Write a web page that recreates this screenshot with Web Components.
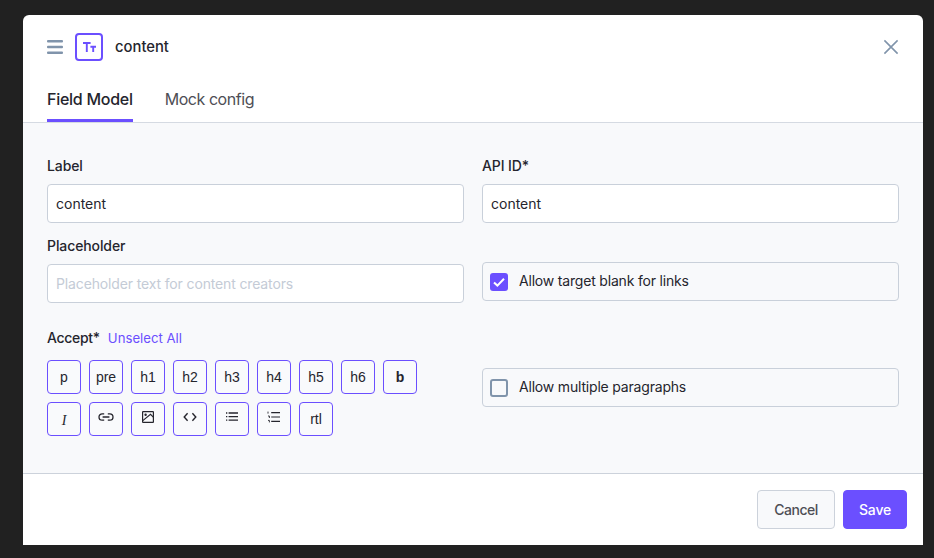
<!DOCTYPE html>
<html>
<head>
<meta charset="utf-8">
<title>content</title>
<style>
    html, body { margin: 0; height: 100%; }
    body {
        background: #212121;
        font-family: Inter, "Liberation Sans", sans-serif;
        color: #25252d;
        overflow: hidden;
    }
</style>
</head>
<body>
<field-modal>
    <span slot="title">content</span>

    <text-field label="Label" value="content"></text-field>
    <text-field slot="right" label="API ID*" value="content"></text-field>
    <text-field label="Placeholder" placeholder="Placeholder text for content creators"></text-field>
    <check-box slot="right" class="first" checked>Allow target blank for links</check-box>

    <accept-list></accept-list>
    <check-box slot="right" class="second">Allow multiple paragraphs</check-box>
</field-modal>

<script>
const ACCENT = "#6b4fff";

class TextField extends HTMLElement {
    constructor () {
        super();
        this.attachShadow({ mode: "open" });
    }

    connectedCallback () {
        const value = this.getAttribute("value");
        const text = value
            ? `<span>${value}</span>`
            : `<span class="ph">${this.getAttribute("placeholder") || ""}</span>`;
        this.shadowRoot.innerHTML = `<style>
            :host { display: block; margin-bottom: 13px; }
            label {
                display: block;
                font-size: 14px;
                line-height: 20px;
                font-weight: 500;
                letter-spacing: -0.1px;
                color: #25252d;
                margin-bottom: 8px;
            }
            .box {
                box-sizing: border-box;
                height: 39px;
                display: flex;
                align-items: center;
                padding: 0 8px;
                background: #fff;
                border: 1px solid #c9d0da;
                border-radius: 4px;
                font-size: 14px;
                color: #25252d;
            }
            .ph { color: #c4cbd6; letter-spacing: -0.14px; }
        </style>
        <label>${this.getAttribute("label")}</label>
        <div class="box">${text}</div>`;
    }
}

class CheckBox extends HTMLElement {
    constructor () {
        super();
        this.attachShadow({ mode: "open" });
    }

    connectedCallback () {
        const on = this.hasAttribute("checked");
        this.shadowRoot.innerHTML = `<style>
            :host {
                display: flex;
                box-sizing: border-box;
                height: 39px;
                align-items: center;
                gap: 11px;
                padding: 0 7px;
                border: 1px solid #c9d0da;
                border-radius: 4px;
                font-size: 14px;
                letter-spacing: -0.19px;
                color: #25252d;
            }
            :host(.first) { margin-top: 39px; }
            :host(.second) { margin-top: 67px; }
            .mark {
                box-sizing: border-box;
                width: 18px;
                height: 18px;
                border-radius: 3px;
                flex: none;
            }
            .on { background: ${ACCENT}; }
            .off { border: 2px solid #8094ab; background: #f8f9fb; }
            svg { display: block; }
            .text { display: block; line-height: 20px; margin-top: -2px; }
        </style>
        <div class="mark ${on ? "on" : "off"}">${on ? `<svg width="18" height="18" viewBox="0 0 18 18"><path d="M4 9.4l3.4 3.2L14 5.8" fill="none" stroke="#fff" stroke-width="2"/></svg>` : ""}</div>
        <span class="text"><slot></slot></span>`;
    }
}

class TagButton extends HTMLElement {
    constructor () {
        super();
        this.attachShadow({ mode: "open" });
        this.shadowRoot.innerHTML = `<style>
            :host {
                display: flex;
                box-sizing: border-box;
                width: 34px;
                height: 34px;
                align-items: center;
                justify-content: center;
                border: 1px solid ${ACCENT};
                border-radius: 4px;
                font-family: "Liberation Sans", Arial, sans-serif;
                font-size: 14px;
                color: #25252d;
                background: #f9fafc;
            }
            :host(.bold) { font-weight: 700; }
            ::slotted(svg) { display: block; margin-top: -4px; }
        </style><slot></slot>`;
    }
}

const ICONS = {
    italic: `<svg width="14" height="14" viewBox="0 0 14 14" style="margin-top:2px"><text x="7" y="12" text-anchor="middle" font-family="Liberation Serif" font-style="italic" font-size="14" fill="#25252d">I</text></svg>`,
    link: `<svg width="16" height="14" viewBox="0 0 16 14" fill="none" stroke="#25252d" stroke-width="1.3"><path d="M6.2 3.8H4.2a3.2 3.2 0 0 0 0 6.4h2M9.8 3.8h2a3.2 3.2 0 0 1 0 6.4h-2M4.6 7h6.8"/></svg>`,
    image: `<svg width="14" height="14" viewBox="0 0 14 14" fill="none" stroke="#25252d" stroke-width="1.2"><rect x="1.6" y="1.6" width="10.8" height="10.8" rx=".5"/><path d="M1.8 10.6L9.5 4.4l2.8 2.8"/><circle cx="4.6" cy="4.8" r="1.2" fill="#25252d" stroke="none"/></svg>`,
    code: `<svg width="14" height="14" viewBox="0 0 14 14" fill="none" stroke="#25252d" stroke-width="1.4"><path d="M4.6 3.2L1.2 7l3.4 3.8M9.4 3.2L12.8 7l-3.4 3.8"/></svg>`,
    ul: `<svg width="14" height="14" viewBox="0 0 14 14" fill="none" stroke="#25252d" stroke-width="1.3"><path d="M3.6 3h9.4M3.6 6.6h9.4M3.6 10.2h9.4"/><path d="M1 3h1.3M1 6.6h1.3M1 10.2h1.3"/></svg>`,
    ol: `<svg width="14" height="14" viewBox="0 0 14 14" fill="none" stroke="#25252d" stroke-width="1.2"><path d="M4.2 2.6h8.8M4.2 7h8.8M4.2 11.4h8.8"/><path d="M1 1.6v2M1 6h1.4v2M1 10.4h1.4v2" stroke-width=".9"/></svg>`
};

class AcceptList extends HTMLElement {
    constructor () {
        super();
        this.attachShadow({ mode: "open" });
    }

    connectedCallback () {
        const tags = ["p", "pre", "h1", "h2", "h3", "h4", "h5", "h6"]
            .map(t => `<tag-button>${t}</tag-button>`).join("");
        const icons = ["italic", "link", "image", "code", "ul", "ol"]
            .map(i => `<tag-button>${ICONS[i]}</tag-button>`).join("");
        this.shadowRoot.innerHTML = `<style>
            :host { display: block; margin-top: 25px; }
            .head {
                display: flex;
                gap: 8px;
                font-size: 14px;
                line-height: 20px;
                margin-bottom: 12px;
            }
            b { font-weight: 500; color: #25252d; letter-spacing: -0.3px; }
            a { color: ${ACCENT}; font-size: 13.2px; }
            .tags { display: flex; flex-wrap: wrap; gap: 8px; width: 380px; }
        </style>
        <div class="head"><b>Accept*</b><a>Unselect All</a></div>
        <div class="tags">
            ${tags}
            <tag-button class="bold">b</tag-button>
            ${icons}
            <tag-button>rtl</tag-button>
        </div>`;
    }
}

class FieldModal extends HTMLElement {
    constructor () {
        super();
        this.attachShadow({ mode: "open" });
        this.shadowRoot.innerHTML = `<style>
            :host {
                display: flex;
                flex-direction: column;
                box-sizing: border-box;
                width: 900px;
                height: 530px;
                margin: 15px 0 0 23px;
                background: #fff;
                border-top-left-radius: 6px;
                border-top-right-radius: 6px;
                overflow: hidden;
            }
            header { flex: none; height: 108px; box-sizing: border-box; border-bottom: 1px solid #d5dae2; padding: 0 24px; }
            .top { display: flex; align-items: center; height: 64px; }
            .drag { margin-right: 12px; display: block; }
            .type {
                box-sizing: border-box;
                width: 28px;
                height: 28px;
                border: 2px solid ${ACCENT};
                border-radius: 4px;
                display: flex;
                align-items: center;
                justify-content: center;
                margin-right: 12px;
            }
            .title { font-size: 14.8px; line-height: 20px; margin-top: -1px; font-weight: 500; color: #25252d; }
            .close { margin-left: auto; display: block; }
            nav { display: flex; gap: 32px; height: 43px; }
            nav span {
                box-sizing: border-box;
                height: 43px;
                padding-top: 10px;
                font-size: 16px;
                line-height: 20px;
                letter-spacing: -0.45px;
                color: #4e4e55;
            }
            nav .active {
                color: #25252d;
                font-weight: 500;
                letter-spacing: -0.27px;
                border-bottom: 3px solid ${ACCENT};
            }
            main {
                flex: 1;
                background: #f8f9fb;
                padding: 33px 24px 0;
                display: grid;
                grid-template-columns: 417px 417px;
                column-gap: 18px;
                align-content: start;
            }
            footer {
                flex: none;
                box-sizing: border-box;
                height: 72px;
                border-top: 1px solid #ccd2db;
                display: flex;
                justify-content: flex-end;
                align-items: center;
                gap: 8px;
                padding: 0 16px 0 0;
            }
            button {
                box-sizing: border-box;
                height: 39px;
                border-radius: 4px;
                font: 500 14px Inter, "Liberation Sans", sans-serif;
                padding: 0;
            }
            .cancel { width: 78px; background: #f8f9fb; border: 1px solid #ccd2db; color: #4e4e55; letter-spacing: -0.5px; }
            .save { width: 64px; background: ${ACCENT}; border: 1px solid ${ACCENT}; color: #fff; letter-spacing: -0.2px; }
        </style>
        <header>
            <div class="top">
                <svg class="drag" width="16" height="14" viewBox="0 0 16 14" fill="#8094ab"><rect y="0" width="16" height="2.6" rx="1"/><rect y="5.7" width="16" height="2.6" rx="1"/><rect y="11.4" width="16" height="2.6" rx="1"/></svg>
                <div class="type"><svg width="13" height="10" viewBox="0 0 13 10" fill="none" stroke="${ACCENT}" stroke-width="1.9"><path d="M0 1h7.6M3.8 1v9M7.4 4.8h5.6M10.2 4.8V10"/></svg></div>
                <div class="title"><slot name="title"></slot></div>
                <svg class="close" width="16" height="16" viewBox="0 0 16 16" fill="none" stroke="#8094ab" stroke-width="1.6"><path d="M1.4 1.4l13.2 13.2M14.6 1.4L1.4 14.6"/></svg>
            </div>
            <nav><span class="active">Field Model</span><span>Mock config</span></nav>
        </header>
        <main>
            <div><slot></slot></div>
            <div><slot name="right"></slot></div>
        </main>
        <footer>
            <button class="cancel">Cancel</button>
            <button class="save">Save</button>
        </footer>`;
    }
}

customElements.define("text-field", TextField);
customElements.define("check-box", CheckBox);
customElements.define("tag-button", TagButton);
customElements.define("accept-list", AcceptList);
customElements.define("field-modal", FieldModal);
</script>
</body>
</html>
